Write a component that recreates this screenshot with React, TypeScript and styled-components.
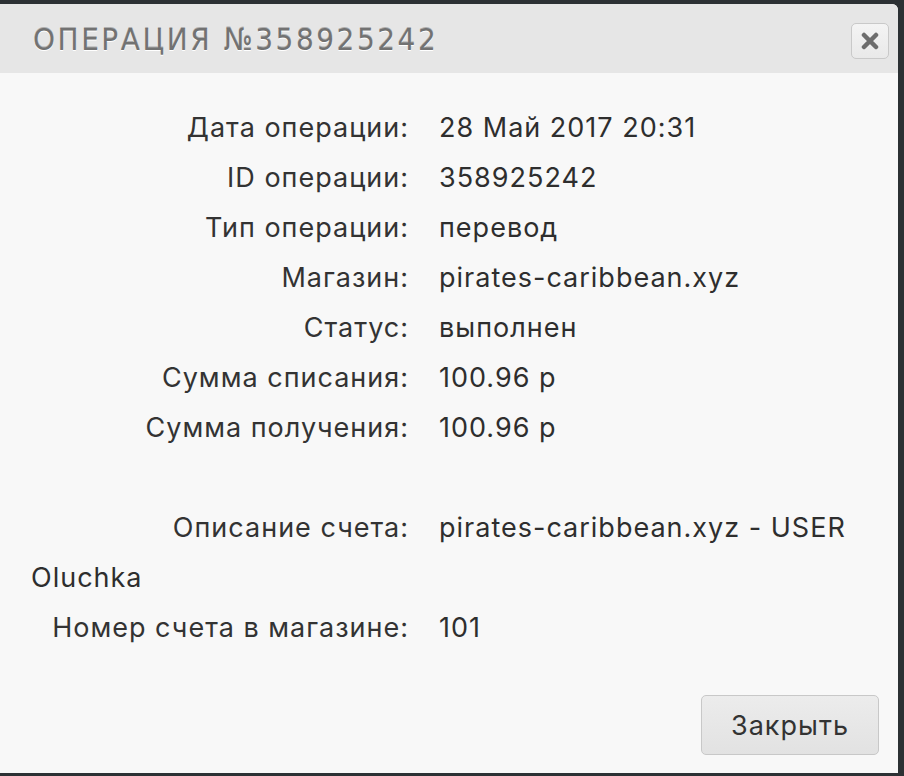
import React from "react";
import styled, { createGlobalStyle } from "styled-components";

const Global = createGlobalStyle`
  html, body { margin: 0; padding: 0; background: #2c3134; }
  body { width: 904px; height: 776px; overflow: hidden; }
`;

const Dialog = styled.div`
  margin-top: 4px;
  width: 898px;
  height: 769px;
  background: #f8f8f8;
  border-radius: 0 6px 0 0;
  display: flex;
  flex-direction: column;
  overflow: hidden;
`;

const Header = styled.div`
  height: 69px;
  flex: none;
  background: #e6e6e6;
  display: flex;
  align-items: center;
  justify-content: space-between;
  padding: 0 9px 0 33px;
`;

const Title = styled.h3`
  margin: 0;
  font-family: "DejaVu Sans Condensed", "DejaVu Sans", sans-serif;
  font-weight: normal;
  font-size: 31px;
  letter-spacing: 2.6px;
  color: #727272;
  text-shadow: 0 1px 0 #ffffff, 0 -1px 0 #b0b0b0;
`;

const CloseButton = styled.button`
  width: 38px;
  height: 36px;
  border: 1px solid #c9c9c9;
  border-radius: 5px;
  background: linear-gradient(#f4f4f4, #e9e9e9);
  display: flex;
  align-items: center;
  justify-content: center;
  padding: 0;
  margin-top: 4px;
`;

const Body = styled.div`
  flex: 1;
  padding: 30px 31px 0 31px;
  font-family: Inter, "Noto Sans", sans-serif;
  font-size: 27px;
  letter-spacing: 1px;
  color: #2e2e2e;
`;

const Row = styled.div`
  line-height: 50px;
  min-height: 50px;
`;

const Label = styled.span`
  display: inline-block;
  width: 378px;
  text-align: right;
  margin-right: 30px;
  color: #333;
`;

const Footer = styled.div`
  display: flex;
  justify-content: flex-end;
  padding: 0 19px 18px 0;
`;

const Button = styled.button`
  width: 178px;
  height: 60px;
  border: 1px solid #c8c8c8;
  border-radius: 5px;
  background: linear-gradient(#ececec, #e2e2e2);
  font-family: Inter, "Noto Sans", sans-serif;
  font-size: 27px;
  letter-spacing: 1px;
  color: #333;
`;

const rows: [string, string][] = [
  ["Дата операции:", "28 Май 2017 20:31"],
  ["ID операции:", "358925242"],
  ["Тип операции:", "перевод"],
  ["Магазин:", "pirates-caribbean.xyz"],
  ["Статус:", "выполнен"],
  ["Сумма списания:", "100.96 р"],
  ["Сумма получения:", "100.96 р"],
  ["", ""],
  ["Описание счета:", "pirates-caribbean.xyz - USER Oluchka"],
  ["Номер счета в магазине:", "101"],
];

export default function App() {
  return (
    <>
      <Global />
      <Dialog>
        <Header>
          <Title>ОПЕРАЦИЯ №358925242</Title>
          <CloseButton aria-label="close">
            <svg width="18" height="18" viewBox="0 0 18 18">
              <path d="M3 3 L15 15 M15 3 L3 15" stroke="#6d6d6d" strokeWidth="4.5" strokeLinecap="round" />
            </svg>
          </CloseButton>
        </Header>
        <Body>
          {rows.map(([l, v], i) => (
            <Row key={i}>
              {l && <Label>{l}</Label>}
              {v}
            </Row>
          ))}
        </Body>
        <Footer>
          <Button>Закрыть</Button>
        </Footer>
      </Dialog>
    </>
  );
}
